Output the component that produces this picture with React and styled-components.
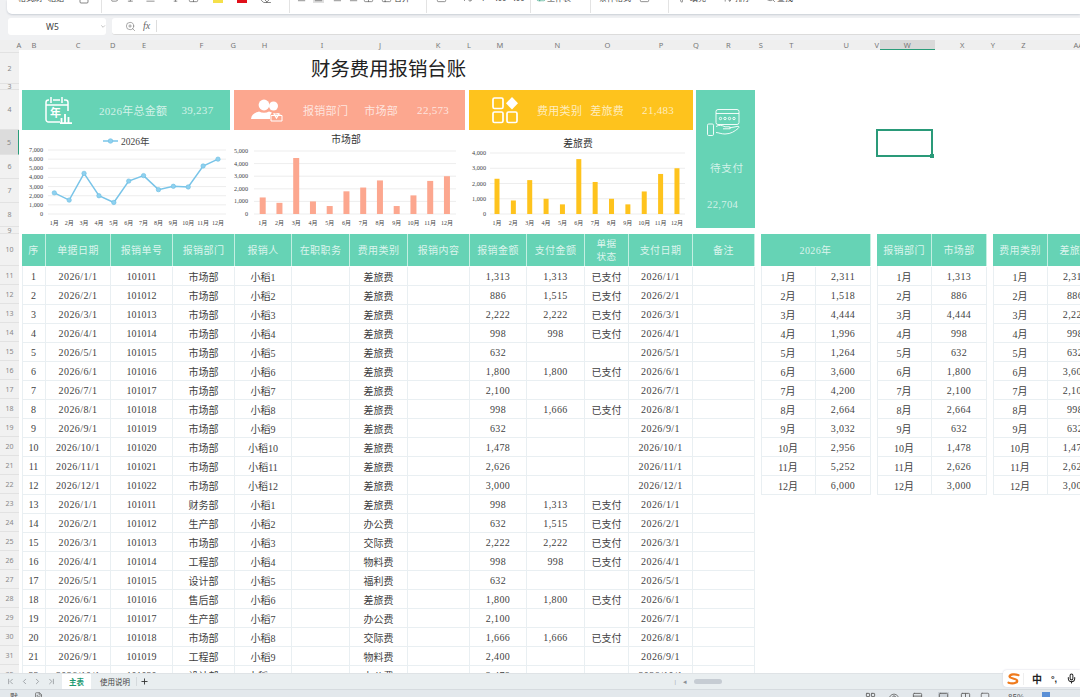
import React from 'react'
import styled, { createGlobalStyle } from 'styled-components'
import {
  Clipboard, Bold, Italic, Underline, Type, Grid2x2, Eraser, AlignLeft, AlignCenter, AlignRight,
  Table2, Percent, Filter, ArrowUpDown, Search, Mic, ChevronDown, ZoomIn, Plus,
  ChevronLeft, ChevronRight, ChevronFirst, ChevronLast, LayoutGrid, Eye, Rows3, Square, Columns2, FileText,
} from 'lucide-react'

const GREEN = '#66d3b5'
const SALMON = '#fca78f'
const YELLOW = '#fec31d'
const SERIF = '"Liberation Serif", "Noto Sans CJK SC", serif'

const GlobalStyle = createGlobalStyle`
  html, body { margin: 0; padding: 0; background: #fff; }
  * { box-sizing: border-box; }
`

const Page = styled.div`
  width: 1080px;
  height: 697px;
  display: flex;
  flex-direction: column;
  overflow: hidden;
  position: relative;
  background: #f0f1f3;
  font-family: ${SERIF};
`

/* ribbon, only its lower edge is on screen */
const Ribbon = styled.div`
  height: 14px;
  margin-left: 7px;
  padding-bottom: 1px;
  display: flex;
  background: #fff;
  border-radius: 0 0 0 5px;
  box-shadow: 0 1px 2px #c9ced6;
  overflow: hidden;
  flex-shrink: 0;
`
const RibbonGroup = styled.div`
  width: ${(p) => p.$w}px;
  display: flex;
  align-items: flex-start;
  border-right: ${(p) => (p.$last ? 'none' : '1px solid #e3e3e3')};
  flex-shrink: 0;
`
const RibbonText = styled.span`
  margin: -7px 0 0 ${(p) => p.$ml}px;
  font: 8px/10px "Noto Sans CJK SC", sans-serif;
  color: #444;
  white-space: nowrap;
`
const RibbonIcon = styled.span`
  margin: -8px 0 0 ${(p) => p.$ml}px;
  display: flex;
  color: #555;
  background: ${(p) => (p.$on ? '#e0e0e0' : 'none')};
`
const Swatch = styled.span`
  width: 10px;
  height: 3px;
  margin-left: ${(p) => p.$ml}px;
  background: ${(p) => p.$c};
`

const FormulaStrip = styled.div`
  height: 26px;
  padding: 4px 0 5px 8px;
  display: flex;
  gap: 6px;
  flex-shrink: 0;
`
const NameBox = styled.div`
  width: 98px;
  display: flex;
  align-items: center;
  background: #fff;
  border-radius: 3px;
  font: 8.5px "Noto Sans", sans-serif;
  color: #444;
  padding-left: 38px;
  gap: 41px;
`
const FormulaBox = styled.div`
  flex: 1;
  display: flex;
  align-items: center;
  background: #fff;
  border-radius: 3px 0 0 3px;
  border-bottom: 1px solid #dcdcdc;
  padding-left: 13px;
  color: #666;
`
const FxMark = styled.i`
  margin-left: 7px;
  padding-right: 6px;
  border-right: 1px solid #ddd;
  font: italic 10px/12px ${SERIF};
`

const ColBar = styled.div`
  height: 10px;
  padding-left: 16px;
  display: flex;
  background: #efefef;
  flex-shrink: 0;
`
const ColLabel = styled.div`
  flex: 0 0 ${(p) => p.$w}px;
  height: 10px;
  display: flex;
  align-items: center;
  justify-content: center;
  font: 7.5px "Noto Sans", sans-serif;
  color: #777;
  background: ${(p) => (p.$active ? '#d9d9d9' : 'none')};
  border-bottom: ${(p) => (p.$active ? '1px solid #2a9d7a' : 'none')};
`

const Body = styled.div`
  flex: 1;
  min-height: 0;
  display: flex;
  overflow: hidden;
`
const Gutter = styled.div`
  width: 19px;
  flex-shrink: 0;
  background: #f1f1f1;
`
const RowLabel = styled.div`
  height: ${(p) => p.$h}px;
  display: flex;
  align-items: center;
  justify-content: center;
  font: 7px "Noto Sans", sans-serif;
  color: #888;
  border-bottom: 1px solid #e2e2e2;
  background: ${(p) => (p.$active ? '#dcdcdc' : 'none')};
  border-right: ${(p) => (p.$active ? '1px solid #2a9d7a' : 'none')};
`

const Sheet = styled.div`
  flex: 1;
  min-width: 0;
  position: relative;
  padding-left: 3px;
  background: #fff;
  overflow: hidden;
`
const Title = styled.h1`
  height: 40px;
  margin: 0;
  padding: 8px 0 0 289px;
  font: 400 19.4px/24px ${SERIF};
  color: #222;
  white-space: nowrap;
`
const Dashboard = styled.div`
  display: flex;
  gap: 3px;
  height: 138px;
`
const DashLeft = styled.div`
  width: 671px;
  display: flex;
  flex-direction: column;
`
const CardRow = styled.div`
  height: 40px;
  display: flex;
  gap: 4px;
`
const Card = styled.div`
  width: ${(p) => p.$w}px;
  padding-left: ${(p) => p.$pl}px;
  display: flex;
  align-items: center;
  background: ${(p) => p.$c};
  color: rgba(255, 255, 255, 0.72);
  font-size: 11px;
  white-space: nowrap;
`
const CardText = styled.span`
  margin-left: ${(p) => p.$ml}px;
  letter-spacing: 0.3px;
`
const ChartRow = styled.div`
  display: flex;
  gap: 4px;
  height: 98px;
`
const ChartBox = styled.svg`
  display: block;
  flex-shrink: 0;
  text { font-family: ${SERIF}; }
`
const PayCard = styled.div`
  width: 59px;
  padding: 19px 0 0 11px;
  display: flex;
  flex-direction: column;
  background: ${GREEN};
  color: rgba(255, 255, 255, 0.72);
  font-size: 10.6px;
`
const PayLabel = styled.div`
  margin: 24px 0 0 3px;
  letter-spacing: 0.6px;
`
const PayValue = styled.div`
  margin-top: 24px;
  letter-spacing: 0.35px;
`

const TableRow = styled.div`
  margin-top: 6px;
  display: flex;
  gap: 6px;
  align-items: flex-start;
  width: 1200px;
`
const Grid = styled.div`
  display: grid;
  flex-shrink: 0;
  grid-template-columns: ${(p) => p.$cols};
  grid-auto-rows: 19px;
  grid-template-rows: 33px;
  box-shadow: inset 1px 0 0 #e9eff2;
`
const HeadCell = styled.div`
  height: 32px;
  display: flex;
  align-items: center;
  justify-content: center;
  text-align: center;
  background: ${GREEN};
  border-right: 1px solid #c3efe2;
  color: rgba(255, 255, 255, 0.78);
  font-size: ${(p) => (p.$small ? 9.6 : 10)}px;
  line-height: 13px;
  letter-spacing: 0.4px;
  grid-column: span ${(p) => p.$span || 1};
`
const Cell = styled.div`
  display: flex;
  align-items: center;
  justify-content: center;
  padding-top: 1px;
  border-right: 1px solid #e9eff2;
  border-bottom: 1px solid #e9eff2;
  color: #3f3f3f;
  font-size: 10px;
  letter-spacing: ${(p) => (p.$spaced ? 0.4 : 0)}px;
  white-space: nowrap;
`

const Cursor = styled.div`
  position: absolute;
  left: 857px;
  top: 79px;
  width: 57px;
  height: 28px;
  border: 2px solid #2a9a79;
  &::after {
    content: '';
    position: absolute;
    right: -3px;
    bottom: -3px;
    width: 4px;
    height: 4px;
    background: #2a9a79;
  }
`

const TabBar = styled.div`
  height: 16px;
  display: flex;
  align-items: center;
  padding-left: 4px;
  background: #e9eef0;
  border-top: 1px solid #dfe3e6;
  color: #8a8f93;
  flex-shrink: 0;
`
const NavBtn = styled.span`
  width: 13.5px;
  display: flex;
  justify-content: center;
`
const Tab = styled.div`
  height: 15px;
  margin-left: ${(p) => p.$ml || 0}px;
  padding: 0 ${(p) => (p.$active ? 7 : 3)}px;
  display: flex;
  align-items: center;
  font: ${(p) => (p.$active ? 600 : 400)} 7.5px "Noto Sans CJK SC", sans-serif;
  color: ${(p) => (p.$active ? '#1c9a72' : '#444')};
  background: ${(p) => (p.$active ? '#fff' : 'none')};
`
const AddTab = styled.span`
  margin-left: 3px;
  padding-left: 3px;
  border-left: 1px solid #d5dadd;
  display: flex;
  color: #333;
`
const ScrollArea = styled.div`
  margin-left: auto;
  margin-right: 358px;
  display: flex;
  align-items: center;
  gap: 7px;
  font-size: 7px;
`
const Thumb = styled.span`
  width: 28px;
  height: 5px;
  border-radius: 3px;
  background: #c6ccd3;
`

const StatusBar = styled.div`
  height: 8px;
  display: flex;
  align-items: flex-start;
  padding: 2px 0 0 10px;
  background: #e3e8ec;
  border-top: 1px solid #d6dbdf;
  overflow: hidden;
  color: #666;
  flex-shrink: 0;
`
const StatusText = styled.span`
  font: 8px/9px "Noto Sans CJK SC", sans-serif;
  color: #555;
  margin-left: ${(p) => p.$ml || 0}px;
`
const StatusIcon = styled.span`
  display: flex;
  margin-left: ${(p) => p.$ml}px;
  background: ${(p) => (p.$on ? '#ccd2d8' : 'none')};
`
const BlueEdge = styled.span`
  width: 8px;
  height: 6px;
  margin-left: 18px;
  background: #5a8fd6;
`

const Ime = styled.div`
  position: absolute;
  right: 0;
  top: 670px;
  width: 77px;
  height: 17px;
  display: flex;
  align-items: center;
  background: #fff;
  border-radius: 4px 0 0 4px;
  box-shadow: 0 0 2px #ccd;
`
const ImeLogo = styled.span`
  width: 21px;
  height: 12px;
  display: flex;
  justify-content: center;
  border-right: 1px solid #eee;
`
const ImeText = styled.span`
  margin-left: 8px;
  font: 700 10px/17px "Noto Sans CJK SC", sans-serif;
  color: #222;
`
const ImeDots = styled.span`
  margin-left: 9px;
  font: 700 9px/12px "Liberation Sans", sans-serif;
  color: #222;
`
const ImeMic = styled.span`
  margin-left: 9px;
  display: flex;
  color: #222;
`

const COLS = [
  ['A', 6], ['B', 24], ['C', 64], ['D', 5], ['E', 57], ['F', 58], ['G', 4], ['H', 57], ['I', 58], ['J', 58],
  ['K', 58], ['L', 4], ['M', 58], ['N', 57], ['O', 43], ['P', 64], ['Q', 5], ['R', 59], ['S', 6], ['T', 55],
  ['U', 55], ['V', 6], ['W', 55], ['X', 55], ['Y', 6], ['Z', 55], ['AA', 55],
]
const ROW_H = [3, 31, 6, 40, 25, 24, 24, 24, 7, 32, ...Array(22).fill(19)]

const MONTHS = ['1月', '2月', '3月', '4月', '5月', '6月', '7月', '8月', '9月', '10月', '11月', '12月']
const TOTAL = [2311, 1518, 4444, 1996, 1264, 3600, 4200, 2664, 3032, 2956, 5252, 6000]
const DEPT = [1313, 886, 4444, 998, 632, 1800, 2100, 2664, 632, 1478, 2626, 3000]
const TRIP = [2311, 886, 2222, 998, 632, 3600, 2100, 998, 632, 1478, 2626, 3000]

const DEPT_ROWS = [
  [1313, 1313], [886, 1515], [2222, 2222], [998, 998], [632, 0], [1800, 1800],
  [2100, 0], [998, 1666], [632, 0], [1478, 0], [2626, 0], [3000, 0],
]
const MIXED_ROWS = [
  ['财务部', '差旅费', 998, 1313], ['生产部', '办公费', 632, 1515], ['市场部', '交际费', 2222, 2222],
  ['工程部', '物料费', 998, 998], ['设计部', '福利费', 632, 0], ['售后部', '差旅费', 1800, 1800],
  ['生产部', '办公费', 2100, 0], ['市场部', '交际费', 1666, 1666], ['工程部', '物料费', 2400, 0],
  ['设计部', '办公费', 2478, 0],
]

const money = (n) => (n ? n.toLocaleString('en-US') : '')

const rows = [
  ...DEPT_ROWS.map(([amt, paid], i) => ({ m: i + 1, dept: '市场部', cat: '差旅费', amt, paid })),
  ...MIXED_ROWS.map(([dept, cat, amt, paid], i) => ({ m: i + 1, dept, cat, amt, paid })),
]

const axis = (max, top, y0) => {
  const out = []
  for (let v = 0; v <= max; v += 1000) out.push({ v, y: y0 - (v / max) * (y0 - top) })
  return out
}

const ChartFrame = ({ w, max, top, labelX, gridFrom, gridTo, firstX, step, children }) => (
  <ChartBox width={w} height={98} viewBox={`0 0 ${w} 98`}>
    {axis(max, top, 84).map((t) => (
      <g key={t.v}>
        <line x1={gridFrom} x2={gridTo} y1={t.y} y2={t.y} stroke="#e9e9e9" strokeWidth="0.8" />
        <text x={labelX} y={t.y + 2} fontSize="6.2" fill="#444" textAnchor="end">{t.v.toLocaleString('en-US')}</text>
      </g>
    ))}
    {MONTHS.map((m, i) => (
      <text key={m} x={firstX + i * step} y={94.5} fontSize="6" fill="#444" textAnchor="middle">{m}</text>
    ))}
    {children}
  </ChartBox>
)

const LineChart = () => {
  const px = (i) => 32.3 + i * 14.88
  const py = (v) => 84 - (v / 7000) * 64
  return (
    <ChartFrame w={208} max={7000} top={20} labelX={21} gridFrom={26} gridTo={204} firstX={32.3} step={14.88}>
      <line x1="81" x2="96" y1="11" y2="11" stroke="#79c4e8" strokeWidth="1.5" />
      <circle cx="88.5" cy="11" r="2.3" fill="#8fd1f0" stroke="#6cbde0" strokeWidth="0.6" />
      <text x="99" y="14.5" fontSize="9.5" fill="#444">2026年</text>
      <polyline points={TOTAL.map((v, i) => `${px(i)},${py(v)}`).join(' ')} fill="none" stroke="#79c4e8" strokeWidth="1.5" />
      {TOTAL.map((v, i) => (
        <circle key={i} cx={px(i)} cy={py(v)} r="2.2" fill="#8fd1f0" stroke="#6cbde0" strokeWidth="0.6" />
      ))}
    </ChartFrame>
  )
}

const BarChart = ({ w, title, titleX, titleY, data, max, top, labelX, gridFrom, gridTo, firstX, step, barW, color }) => (
  <ChartFrame w={w} max={max} top={top} labelX={labelX} gridFrom={gridFrom} gridTo={gridTo} firstX={firstX} step={step}>
    <text x={titleX} y={titleY} fontSize="9.8" fill="#333" textAnchor="middle">{title}</text>
    {data.map((v, i) => {
      const h = (v / max) * (84 - top)
      return <rect key={i} x={firstX + i * step - barW / 2} y={84 - h} width={barW} height={h} fill={color} />
    })}
  </ChartFrame>
)

const CalendarIcon = () => (
  <svg width="27" height="28" viewBox="0 0 27 28" fill="none" stroke="#fff" strokeWidth="1.5">
    <path d="M19 4h1.5a2.5 2.5 0 0 1 2.5 2.5V15M8 4h7M4 4H3.5A2.5 2.5 0 0 0 1 6.5v17A2.5 2.5 0 0 0 3.5 26H15" />
    <path d="M6 1v6M17 1v6M1 9h22" />
    <text x="5" y="21" fontSize="11" fill="#fff" stroke="none" fontWeight="700" fontFamily="Noto Sans CJK SC">年</text>
    <path d="M16.5 27v-5M20 27v-9M23.5 27v-6M15 27.2h12" strokeWidth="1.8" />
  </svg>
)

const PeopleIcon = () => (
  <svg width="33" height="24" viewBox="0 0 33 24">
    <g fill="#fff">
      <circle cx="13" cy="7" r="5.4" />
      <path d="M0 21c.5-5 5-6.6 8-7.5 3 1.6 7 1.6 10 0 1 .3 2 .7 3 1.3-1.5 1-2 3-2 6.2z" />
      <circle cx="22.5" cy="8" r="4.5" />
      <path d="M22 15c1.5.6 4 .6 5 0 1 .3 2 .8 3 1.5h-7z" />
    </g>
    <path d="M20 17.5h11V23H20z" fill="none" stroke="#fff" strokeWidth="1" />
    <path d="M23 16l2.5 4 2.5-4" fill="none" stroke="#fff" strokeWidth="1.3" />
  </svg>
)

const AppsIcon = () => (
  <svg width="26" height="27" viewBox="0 0 26 27" fill="none" stroke="#fff" strokeWidth="1.7">
    <rect x="1" y="1" width="10" height="10.5" rx="1.5" />
    <rect x="1" y="15" width="10" height="10.5" rx="1.5" />
    <rect x="15" y="15" width="10" height="10.5" rx="1.5" />
    <path d="M20 0l6 6.3-6 6.3-6-6.3z" fill="#fff" stroke="none" />
  </svg>
)

const PayIcon = () => (
  <svg width="33" height="27" viewBox="0 0 33 27" fill="none" stroke="#fff" strokeWidth="0.9">
    <rect x="9" y="0.5" width="23" height="15" rx="2" />
    <path d="M9 4.5h23" />
    <circle cx="13.5" cy="9.5" r="1.2" />
    <circle cx="18" cy="9.5" r="1.2" />
    <circle cx="22.5" cy="9.5" r="1.2" />
    <circle cx="27" cy="9.5" r="1.2" />
    <rect x="0.5" y="15" width="6" height="11.5" rx="1.2" />
    <path d="M9 17.5c3-1.8 6-1.3 9 .3h4.5c1.3 0 1.3 2 0 2H16M22 19l9-1.7c1.5 0 1 1.5 0 2.2-3 2.5-7 5.5-13 5.5-4 0-6-1.3-9-1.5" />
  </svg>
)

const ImeMark = () => (
  <svg width="13" height="12" viewBox="0 0 13 12" fill="none" stroke="#ef7a1c" strokeWidth="2.2" strokeLinecap="round">
    <path d="M11.5 2.2C8 .8 3 1.2 2.5 3.5 2.2 5.5 10.500 5.500 10.300 8 10 10.500 5 11 1.500 9.700" />
  </svg>
)

const MainTable = () => (
  <Grid $cols="24px 65px 62px 62px 57px 58px 58px 62px 57px 58px 44px 64px 62px">
    {['序', '单据日期', '报销单号', '报销部门', '报销人', '在职职务', '费用类别', '报销内容', '报销金额', '支付金额'].map((h) => (
      <HeadCell key={h}>{h}</HeadCell>
    ))}
    <HeadCell $small>单据<br />状态</HeadCell>
    <HeadCell>支付日期</HeadCell>
    <HeadCell>备注</HeadCell>
    {rows.map((r, i) => {
      const date = `2026/${r.m}/1`
      const paid = r.paid > 0
      const id = 101010 + r.m
      const staff = `小稻${r.m}`
      return (
        <React.Fragment key={i}>
          <Cell>{i + 1}</Cell>
          <Cell $spaced>{date}</Cell>
          <Cell>{id}</Cell>
          <Cell>{r.dept}</Cell>
          <Cell>{staff}</Cell>
          <Cell />
          <Cell>{r.cat}</Cell>
          <Cell />
          <Cell $spaced>{money(r.amt)}</Cell>
          <Cell $spaced>{money(r.paid)}</Cell>
          <Cell>{paid ? '已支付' : ''}</Cell>
          <Cell $spaced>{date}</Cell>
          <Cell />
        </React.Fragment>
      )
    })}
  </Grid>
)

const SideTable = ({ heads, data }) => (
  <Grid $cols="55px 55px">
    {heads.length === 1
      ? <HeadCell $span={2}>{heads[0]}</HeadCell>
      : heads.map((h) => <HeadCell key={h}>{h}</HeadCell>)}
    {data.map((v, i) => (
      <React.Fragment key={i}>
        <Cell>{MONTHS[i]}</Cell>
        <Cell $spaced>{money(v)}</Cell>
      </React.Fragment>
    ))}
  </Grid>
)

const ICON = { strokeWidth: 1.4 }

const App = () => (
  <Page>
    <GlobalStyle />
    <Ribbon>
      <RibbonGroup $w={95}>
        <RibbonText $ml={11}>格式刷</RibbonText>
        <RibbonText $ml={6}>粘贴</RibbonText>
        <RibbonIcon $ml={14}><Clipboard size={12} {...ICON} /></RibbonIcon>
      </RibbonGroup>
      <RibbonGroup $w={188}>
        <RibbonIcon $ml={7}><Bold size={11} {...ICON} /></RibbonIcon>
        <RibbonIcon $ml={6}><Italic size={11} {...ICON} /></RibbonIcon>
        <RibbonIcon $ml={8}><Underline size={11} {...ICON} /></RibbonIcon>
        <RibbonIcon $ml={14}><Type size={11} {...ICON} /></RibbonIcon>
        <RibbonIcon $ml={7}><Grid2x2 size={11} {...ICON} /></RibbonIcon>
        <Swatch $ml={14} $c="#f5e04a" />
        <Swatch $ml={14} $c="#e0101a" />
        <RibbonIcon $ml={13}><Eraser size={12} {...ICON} /></RibbonIcon>
      </RibbonGroup>
      <RibbonGroup $w={137}>
        <RibbonIcon $ml={7}><AlignLeft size={11} {...ICON} /></RibbonIcon>
        <RibbonIcon $ml={5} $on><AlignCenter size={11} {...ICON} /></RibbonIcon>
        <RibbonIcon $ml={7}><AlignRight size={11} {...ICON} /></RibbonIcon>
        <RibbonIcon $ml={7}><AlignLeft size={11} {...ICON} /></RibbonIcon>
        <RibbonIcon $ml={3}><Columns2 size={11} {...ICON} /></RibbonIcon>
        <RibbonIcon $ml={7}><Table2 size={11} {...ICON} /></RibbonIcon>
        <RibbonText $ml={2}>合并</RibbonText>
      </RibbonGroup>
      <RibbonGroup $w={104}>
        <RibbonIcon $ml={9}><Square size={11} {...ICON} /></RibbonIcon>
        <RibbonIcon $ml={15}><Percent size={11} {...ICON} /></RibbonIcon>
        <RibbonText $ml={8}>¥</RibbonText>
        <RibbonText $ml={10}>.00</RibbonText>
        <RibbonText $ml={7}>.00</RibbonText>
      </RibbonGroup>
      <RibbonGroup $w={60}>
        <RibbonIcon $ml={5}><Table2 size={10} color="#2a9d7a" {...ICON} /></RibbonIcon>
        <RibbonText $ml={1}>工作表</RibbonText>
      </RibbonGroup>
      <RibbonGroup $w={78}>
        <RibbonText $ml={8}>条件格式</RibbonText>
        <RibbonIcon $ml={8}><Rows3 size={11} {...ICON} /></RibbonIcon>
      </RibbonGroup>
      <RibbonGroup $w={180} $last>
        <RibbonIcon $ml={7}><Filter size={11} {...ICON} /></RibbonIcon>
        <RibbonText $ml={3}>填充</RibbonText>
        <RibbonIcon $ml={16}><ArrowUpDown size={11} {...ICON} /></RibbonIcon>
        <RibbonText $ml={2}>排序</RibbonText>
        <RibbonIcon $ml={14}><Search size={11} {...ICON} /></RibbonIcon>
        <RibbonText $ml={1}>查找</RibbonText>
      </RibbonGroup>
    </Ribbon>

    <FormulaStrip>
      <NameBox>W5<ChevronDown size={9} color="#888" /></NameBox>
      <FormulaBox>
        <ZoomIn size={11} strokeWidth={1.2} />
        <FxMark>fx</FxMark>
      </FormulaBox>
    </FormulaStrip>

    <ColBar>
      {COLS.map(([name, w]) => <ColLabel key={name} $w={w} $active={name === 'W'}>{name}</ColLabel>)}
    </ColBar>

    <Body>
      <Gutter>
        {ROW_H.map((h, i) => <RowLabel key={i} $h={h} $active={i === 4}>{h > 5 ? i + 1 : ''}</RowLabel>)}
      </Gutter>
      <Sheet>
        <Title>财务费用报销台账</Title>
        <Dashboard>
          <DashLeft>
            <CardRow>
              <Card $w={208} $c={GREEN} $pl={23}>
                <CalendarIcon />
                <CardText $ml={27}>2026年总金额</CardText>
                <CardText $ml={14}>39,237</CardText>
              </Card>
              <Card $w={231} $c={SALMON} $pl={17}>
                <PeopleIcon />
                <CardText $ml={19}>报销部门</CardText>
                <CardText $ml={16}>市场部</CardText>
                <CardText $ml={19}>22,573</CardText>
              </Card>
              <Card $w={224} $c={YELLOW} $pl={23}>
                <AppsIcon />
                <CardText $ml={19}>费用类别</CardText>
                <CardText $ml={8}>差旅费</CardText>
                <CardText $ml={18}>21,483</CardText>
              </Card>
            </CardRow>
            <ChartRow>
              <LineChart />
              <BarChart w={231} title="市场部" titleX={112} titleY={13} data={DEPT} max={5000} top={21} labelX={14} gridFrom={20} gridTo={222} firstX={28.7} step={16.75} barW={6} color={SALMON} />
              <BarChart w={224} title="差旅费" titleX={109} titleY={17} data={TRIP} max={4000} top={23} labelX={17} gridFrom={21} gridTo={216} firstX={28} step={16.36} barW={5} color={YELLOW} />
            </ChartRow>
          </DashLeft>
          <PayCard>
            <PayIcon />
            <PayLabel>待支付</PayLabel>
            <PayValue>22,704</PayValue>
          </PayCard>
        </Dashboard>
        <TableRow>
          <MainTable />
          <SideTable heads={['2026年']} data={TOTAL} />
          <SideTable heads={['报销部门', '市场部']} data={DEPT} />
          <SideTable heads={['费用类别', '差旅费']} data={TRIP} />
        </TableRow>
        <Cursor />
      </Sheet>
    </Body>

    <TabBar>
      <NavBtn><ChevronFirst size={9} /></NavBtn>
      <NavBtn><ChevronLeft size={9} /></NavBtn>
      <NavBtn><ChevronRight size={9} /></NavBtn>
      <NavBtn><ChevronLast size={9} /></NavBtn>
      <Tab $ml={4} $active>主表</Tab>
      <Tab $ml={6}>使用说明</Tab>
      <AddTab><Plus size={9} strokeWidth={2.4} /></AddTab>
      <ScrollArea>
        <span>|</span>
        <span>◂</span>
        <Thumb />
      </ScrollArea>
    </TabBar>

    <StatusBar>
      <StatusText>默</StatusText>
      <StatusIcon $ml={16}><FileText size={9} /></StatusIcon>
      <StatusIcon $ml={822}><LayoutGrid size={11} /></StatusIcon>
      <StatusIcon $ml={13}><Eye size={10} /></StatusIcon>
      <StatusIcon $ml={13}><Rows3 size={11} /></StatusIcon>
      <StatusIcon $ml={15} $on><Square size={11} /></StatusIcon>
      <StatusIcon $ml={11}><Columns2 size={11} /></StatusIcon>
      <StatusIcon $ml={9}><Square size={10} /></StatusIcon>
      <StatusText $ml={18}>85%</StatusText>
      <BlueEdge />
    </StatusBar>

    <Ime>
      <ImeLogo><ImeMark /></ImeLogo>
      <ImeText>中</ImeText>
      <ImeDots>°,</ImeDots>
      <ImeMic><Mic size={11} strokeWidth={2.2} /></ImeMic>
    </Ime>
  </Page>
)

export default App
